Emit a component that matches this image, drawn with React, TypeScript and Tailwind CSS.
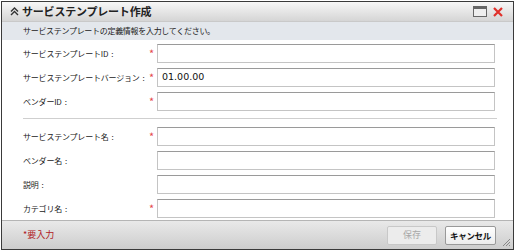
import React from 'react'

const font = { fontFamily: '"Noto Sans CJK JP", "Liberation Sans", sans-serif' }

type Row = { label: string; required?: boolean; value?: string }

const groupA: Row[] = [
  { label: 'サービステンプレートID:', required: true },
  { label: 'サービステンプレートバージョン:', required: true, value: '01.00.00' },
  { label: 'ベンダーID:', required: true },
]

const groupB: Row[] = [
  { label: 'サービステンプレート名:', required: true },
  { label: 'ベンダー名:' },
  { label: '説明:' },
  { label: 'カテゴリ名:', required: true },
]

function FieldRow({ row }: { row: Row }) {
  return (
    <div className="flex h-[19px] items-center">
      <span className="w-[124px] whitespace-nowrap text-[8px] tracking-[-0.2px] text-[#222]">
        {row.label.replace(':', '')}
        <span className="ml-[3px]">:</span>
      </span>
      <span className="w-[9px] text-center text-[11px] leading-none text-[#e5484d]">{row.required ? '*' : ''}</span>
      <div
        className="ml-[1px] flex h-[19px] w-[338px] items-center border border-[#c4c4c4] border-t-[#9a9a9a] bg-white px-[4px] text-[10px] text-[#111]"
        style={{ fontFamily: '"DejaVu Sans", sans-serif' }}
      >
        <span className="text-[9.5px]">{row.value}</span>
      </div>
    </div>
  )
}

export default function App() {
  return (
    <div className="h-[251px] w-[515px] bg-white pl-[1px] pt-[1px]" style={font}>
      <div className="flex h-[249px] w-[513px] flex-col border border-[#3a3a3a]">
        <div className="flex h-[19px] items-center bg-gradient-to-b from-[#f7f7f7] to-[#d5d5d5] pl-[8px] pr-[10px]">
          <svg width="9" height="9" viewBox="0 0 9 9" className="mr-[3px]">
            <path d="M1 4.5 L4.5 1 L8 4.5 M1 8 L4.5 4.5 L8 8" fill="none" stroke="#333" strokeWidth="1.4" />
          </svg>
          <span className="text-[11px] font-bold tracking-[-0.2px] text-[#222]">サービステンプレート作成</span>
          <div className="ml-auto flex items-center gap-[6px]">
            <svg width="14" height="11" viewBox="0 0 14 11">
              <rect x="0.5" y="0.5" width="13" height="10" fill="#eee" stroke="#666" />
              <rect x="1" y="1" width="12" height="2" fill="#666" />
            </svg>
            <svg width="10" height="10" viewBox="0 0 10 10">
              <path d="M1 1 L9 9 M9 1 L1 9" stroke="#e0302a" strokeWidth="2.2" />
            </svg>
          </div>
        </div>
        <div className="flex h-[19px] items-center border-t border-[#c9c9c9] bg-[#e3e7ec] pl-[21px] text-[8px] tracking-[-0.3px] text-[#222]">
          サービステンプレートの定義情報を入力してください。
        </div>
        <div className="flex-1 bg-white pl-[21px] pt-[4px]">
          <div className="flex flex-col gap-[5px]">
            {groupA.map((r) => (
              <FieldRow key={r.label} row={r} />
            ))}
          </div>
          <div className="my-[7px] mr-[16px] h-[1px] bg-[#cfcfcf]" />
          <div className="flex flex-col gap-[5px] pt-[1px]">
            {groupB.map((r) => (
              <FieldRow key={r.label} row={r} />
            ))}
          </div>
        </div>
        <div className="relative flex h-[29px] items-center border-t border-[#b5b5b5] bg-gradient-to-b from-[#e9e9e9] to-[#cdcdcd] pl-[21px] pr-[17px]">
          <span className="text-[9px] text-[#b0201f]">*要入力</span>
          <div className="ml-auto flex gap-[8px]">
            <button className="h-[19px] w-[50px] rounded-[2px] border border-[#c8c8c8] bg-[#ececec] text-[9px] text-[#a8a8a8]">保存</button>
            <button className="h-[19px] w-[51px] rounded-[2px] border border-[#999] bg-gradient-to-b from-white to-[#ececec] text-[8.5px] font-bold tracking-[-0.3px] text-[#111]">キャンセル</button>
          </div>
          <svg width="10" height="10" viewBox="0 0 10 10" className="absolute bottom-[2px] right-[2px]">
            <path d="M9 2 L2 9 M9 5 L5 9 M9 8 L8 9" stroke="#888" strokeWidth="1" />
          </svg>
        </div>
      </div>
    </div>
  )
}
